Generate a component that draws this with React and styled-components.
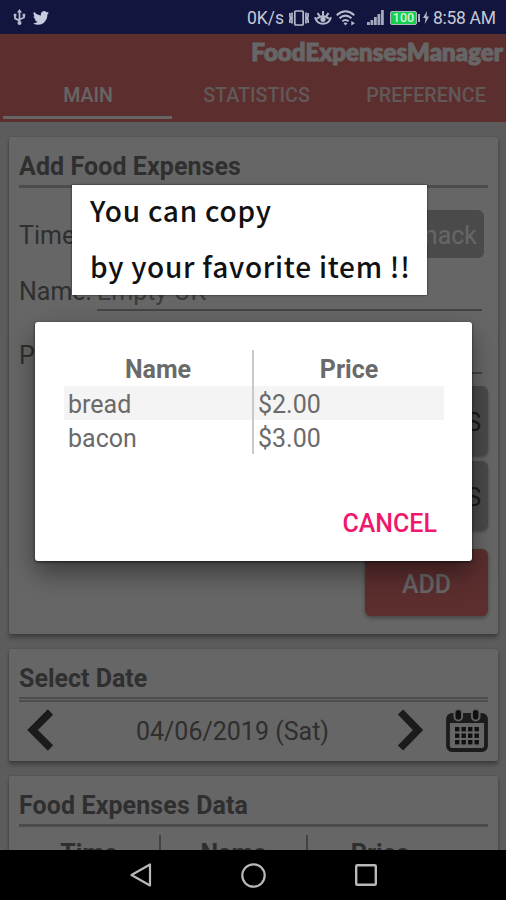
import React from 'react';
import styled, { createGlobalStyle } from 'styled-components';

const GlobalStyle = createGlobalStyle`
  * { box-sizing: border-box; }
  body { margin: 0; background: #000; font-family: Roboto, sans-serif; }
`;

const Screen = styled.div`
  position: relative;
  display: flex;
  flex-direction: column;
  width: 506px;
  height: 900px;
  overflow: hidden;
`;

const StatusBar = styled.div`
  display: flex;
  justify-content: space-between;
  align-items: center;
  flex: none;
  height: 34px;
  padding: 1px 11px 0 13px;
  background: #12163f;
  color: #c6c8d6;
  font-size: 17.5px;
  white-space: nowrap;
`;

const StatusGroup = styled.div`
  display: flex;
  align-items: center;
`;

const StatusText = styled.span`
  width: ${(p) => p.$width}px;
  padding-top: 1px;
  letter-spacing: ${(p) => p.$spacing || 0}px;
`;

const Header = styled.header`
  display: flex;
  flex-direction: column;
  flex: none;
  height: 88px;
  background: #e57373;
  color: #fff;
`;

const AppTitle = styled.h1`
  margin: 0;
  padding: 3px 3px 0 0;
  height: 37px;
  text-align: right;
  font: 900 24px/30px Lato, sans-serif;
  letter-spacing: 0.12px;
  -webkit-text-stroke: 1.1px #fff;
`;

const Tabs = styled.nav`
  display: grid;
  grid-template-columns: 169px 169px 1fr;
  flex: 1;
  padding: 0 0 3px 3px;
`;

const Tab = styled.div`
  display: flex;
  align-items: center;
  justify-content: center;
  padding: 4px 0 0 ${(p) => (p.$active ? 1 : p.$last ? 5 : 0)}px;
  border-bottom: 3px solid ${(p) => (p.$active ? '#fff' : 'transparent')};
  color: ${(p) => (p.$active ? '#fff' : '#f3dcdc')};
  font-size: ${(p) => (p.$active ? 19.5 : 19.7)}px;
  font-weight: 500;
`;

const Content = styled.main`
  display: flex;
  flex-direction: column;
  flex: 1;
  gap: 15px;
  min-height: 0;
  padding: 15px 8px 0 9px;
  overflow: hidden;
  background: #e6e6e6;
`;

const Card = styled.section`
  flex: none;
  height: ${(p) => p.$height}px;
  padding: 15px 10px 0;
  border-radius: 2px;
  background: #fff;
  box-shadow: 0 4px 4px rgba(0, 0, 0, 0.3), 0 0 2px rgba(0, 0, 0, 0.25);
  color: #757575;
`;

const CardTitle = styled.h2`
  height: 33px;
  margin: 0;
  font-size: 25px;
  font-weight: 700;
  line-height: 30px;
  letter-spacing: ${(p) => p.$spacing || 0}px;
`;

const Rule = styled.div`
  height: ${(p) => (p.$double ? 5 : 4)}px;
  border-top: ${(p) => (p.$double ? 2 : 3)}px solid #bdbdbd;
  border-bottom: ${(p) => (p.$double ? 2 : 0)}px solid #bdbdbd;
`;

const FieldRow = styled.div`
  display: flex;
  justify-content: space-between;
  height: ${(p) => p.$height}px;
  margin-top: ${(p) => p.$gap || 0}px;
  padding-right: ${(p) => p.$right || 0}px;
  font-size: 25px;
  line-height: 30px;
`;

const FieldLabel = styled.span`
  padding-top: ${(p) => p.$drop || 0}px;
`;

const Input = styled.div`
  width: 385px;
  height: 100%;
  padding-top: 2px;
  border-bottom: 2px solid #ababab;
  color: #949494;
`;

const GreyButton = styled.div`
  display: flex;
  align-items: center;
  justify-content: flex-end;
  width: ${(p) => p.$width}px;
  height: ${(p) => p.$height}px;
  padding: 3px 7px 0 0;
  border-radius: 6px;
  background: #b9b9b9;
  color: ${(p) => p.$color};
  font-size: 25px;
  box-shadow: ${(p) => (p.$raised ? '0 2px 3px rgba(0,0,0,.3)' : 'none')};
`;

const ButtonStack = styled.div`
  display: flex;
  flex-direction: column;
  align-items: flex-end;
  gap: 6px;
  margin-top: 12px;
`;

const AddButton = styled.div`
  display: flex;
  align-items: center;
  justify-content: center;
  width: 123px;
  height: 67px;
  margin-top: 13px;
  padding-top: 3px;
  border-radius: 6px;
  background: #e57373;
  color: #fff;
  font-size: 25px;
  font-weight: 500;
  box-shadow: 0 2px 4px rgba(0, 0, 0, 0.35);
`;

const DateRow = styled.div`
  display: grid;
  grid-template-columns: 42px 1fr 44px 42px;
  align-items: center;
  column-gap: 6px;
  height: 56px;
  color: #757575;
`;

const DateText = styled.span`
  padding: 3px 0 0 8px;
  text-align: center;
  font-size: 25px;
`;

const DataHead = styled.div`
  display: grid;
  grid-template-columns: 142px 147px 1fr;
  margin-top: 7px;
`;

const DataCell = styled.div`
  height: 60px;
  padding-top: 4px;
  border-right: ${(p) => (p.$last ? 0 : 2)}px solid #a5a5a5;
  padding-right: ${(p) => (p.$last ? 36 : 0)}px;
  text-align: center;
  font-size: 25px;
  font-weight: 700;
  line-height: 30px;
`;

const NavBar = styled.div`
  display: flex;
  align-items: center;
  justify-content: center;
  flex: none;
  gap: 89px;
  height: 50px;
  background: #000;
`;

const Scrim = styled.div`
  position: absolute;
  inset: 34px 0 50px;
  background: rgba(0, 0, 0, 0.6);
`;

const Dialog = styled.div`
  position: absolute;
  left: 35px;
  top: 322px;
  display: flex;
  flex-direction: column;
  width: 437px;
  height: 239px;
  padding: 28px 28px 0 29px;
  border-radius: 3px;
  background: #fff;
  color: #6a6a6a;
  box-shadow: 0 12px 26px rgba(0, 0, 0, 0.42), 0 1px 3px rgba(0, 0, 0, 0.6);
`;

const ItemTable = styled.div`
  display: grid;
  grid-template-columns: 190px 190px;
  height: 104px;
`;

const Column = styled.div`
  border-right: ${(p) => (p.$divided ? 2 : 0)}px solid #c9c9c9;
`;

const ColumnHead = styled.div`
  height: 36px;
  padding-top: 5px;
  text-align: center;
  font-size: 25px;
  font-weight: 700;
  line-height: 30px;
`;

const ItemCell = styled.div`
  height: 34px;
  padding: 2px 4px 0;
  background: ${(p) => (p.$striped ? '#f4f4f4' : 'transparent')};
  font-size: 25px;
  line-height: 34px;
`;

const CancelButton = styled.div`
  align-self: flex-end;
  margin: 55px 7px 0 0;
  color: #f0186c;
  font-size: 25px;
  font-weight: 500;
  line-height: 30px;
`;

const Callout = styled.div`
  position: absolute;
  left: 72px;
  top: 185px;
  display: flex;
  flex-direction: column;
  gap: 1px;
  width: 355px;
  height: 110px;
  padding-left: 18px;
  background: #fff;
  color: #111;
  font: 500 28px/50px 'Noto Sans CJK JP', sans-serif;
  letter-spacing: 0.75px;
  white-space: nowrap;
  box-shadow: 0 0 2px rgba(0, 0, 0, 0.7);
`;

const CalloutLine = styled.div`
  height: 55px;
`;

const Icon = styled.svg`
  display: block;
  flex: none;
  margin-right: ${(p) => p.$after || 0}px;
  overflow: visible;
`;

const UsbIcon = () => (
  <Icon $after={7} width="13" height="17" viewBox="0 0 13 17" fill="none" stroke="#b9bbcb" strokeWidth="1.8">
    <path d="M6.5 2v12M2 6v3.4l4.5 2.2M11 6v2.5L6.5 10.5" />
    <path d="M6.5 0l2.5 3.6H4zM.8 4.8h2.6v2.6H.8zM9.6 4.8h2.6v2.6H9.6z" fill="#b9bbcb" stroke="none" />
    <circle cx="6.5" cy="14" r="2" fill="#b9bbcb" stroke="none" />
  </Icon>
);

const TwitterIcon = () => (
  <Icon width="16" height="14" viewBox="0 2 24 20" preserveAspectRatio="none" fill="#c9cbe0">
    <path d="M23.95 4.57a10 10 0 0 1-2.82.77 4.96 4.96 0 0 0 2.16-2.72c-.95.55-2 .95-3.13 1.18a4.92 4.92 0 0 0-8.38 4.48C7.69 8.1 4.07 6.13 1.64 3.16a4.92 4.92 0 0 0 1.52 6.57 4.9 4.9 0 0 1-2.23-.61v.06a4.92 4.92 0 0 0 3.95 4.83 5 5 0 0 1-2.21.08 4.94 4.94 0 0 0 4.6 3.42A9.87 9.87 0 0 1 0 19.54a14 14 0 0 0 7.55 2.21c9.05 0 14-7.5 14-13.98 0-.21 0-.42-.02-.63a9.9 9.9 0 0 0 2.42-2.57z" />
  </Icon>
);

const VibrateIcon = () => (
  <Icon $after={5} width="20" height="16" viewBox="0 0 20 16" fill="none" stroke="#b9bbcb" strokeWidth="1.7">
    <rect x="5.8" y="1" width="8.4" height="14" rx="1" />
    <path d="M3 2.5v11M17 2.5v11M.9 3v3l.6 2-.6 2v3M19.1 3v3l-.6 2 .6 2v3" />
  </Icon>
);

const EyeIcon = () => (
  <Icon $after={4} width="18" height="15" viewBox="0 0 18 15" fill="none" stroke="#b9bbcb" strokeWidth="2">
    <path d="M1 7.2Q3 13.8 9 13.8T17 7.2M3 8.8Q9 3.5 15 8.8M9 1v4M3.5 3l2 2.8M14.5 3l-2 2.8" />
    <circle cx="9" cy="9.3" r="2.6" fill="#b9bbcb" stroke="none" />
  </Icon>
);

const WifiIcon = () => (
  <Icon $after={12} width="19" height="16" viewBox="0 0 19 16" fill="none" stroke="#b9bbcb" strokeWidth="2">
    <path d="M.7 5.2Q9.5-2.6 18.3 5.2M3.5 8.3Q9.5 3 15.5 8.3M6.3 11.3Q9.5 8.6 12.7 11.3" />
    <path d="M9.5 15.5l-2-2.2q2-1.6 4 0zM15.3 11l3.7 2.3-3.7 2.3z" fill="#b9bbcb" stroke="none" />
  </Icon>
);

const SignalIcon = () => (
  <Icon $after={6} width="17" height="15" viewBox="0 0 17 15" fill="#a6a8bc">
    <path d="M0 12h2.8v3H0zM3.5 10h2.8v5H3.5zM7 7h2.8v8H7zM10.5 4h2.8v11h-2.8zM14 0h2.8v15H14z" />
  </Icon>
);

const Battery = styled.div`
  display: flex;
  align-items: center;
  justify-content: center;
  width: 27px;
  height: 14px;
  border: 1px solid #aeb7bd;
  border-radius: 2px;
  background: #14cf4c;
  color: #d5f5dc;
  font-size: 12.5px;
  font-weight: 500;
  line-height: 12px;
`;

const BatteryTip = styled.div`
  width: 2px;
  height: 8px;
  margin: 0 3px 0 1px;
  background: #aeb0c0;
`;

const BoltIcon = () => (
  <Icon $after={4} width="6" height="13" viewBox="0 0 6 13" fill="#b9bbcb">
    <path d="M4 0L0 7h2.5L1.8 13 6 5.5H3.4z" />
  </Icon>
);

const Chevron = ({ flip }) => (
  <Icon width="42" height="44" viewBox="0 0 42 44" fill="none" stroke="#444" strokeWidth="7.5">
    <path d={flip ? 'M4.5 4L22 22L4.5 40' : 'M31.5 4L13.5 22L31.5 40'} />
  </Icon>
);

const CalendarIcon = () => (
  <Icon width="42" height="43" viewBox="0 0 42 43">
    <rect x="2" y="6" width="38" height="35" rx="4" fill="none" stroke="#444" strokeWidth="3.8" />
    <path d="M2 14V8q0-3 3-3h32q3 0 3 3v6z" fill="#444" />
    {[12.3, 29.7].map((x) => (
      <rect key={x} x={x - 3.8} y="0" width="7.6" height="11.5" rx="3.8" fill="#282828" stroke="#f2f2f2" strokeWidth="2" />
    ))}
    {[18, 24.5, 31].map((y) =>
      [9, 15.5, 22, 28.5].map((x) => <rect key={`${x}-${y}`} x={x} y={y} width="4.4" height="4.4" fill="#282828" />)
    )}
  </Icon>
);

const BackIcon = () => (
  <Icon width="22" height="24" viewBox="0 0 22 24" fill="none" stroke="#b8b8b8" strokeWidth="2.2" strokeLinejoin="round">
    <path d="M20 1.5v21L1.5 12z" />
  </Icon>
);

const HomeIcon = () => (
  <Icon width="25" height="25" viewBox="0 0 25 25" fill="none" stroke="#b8b8b8" strokeWidth="2.2">
    <circle cx="12.5" cy="12.5" r="11.2" />
  </Icon>
);

const RecentIcon = () => (
  <Icon width="22" height="22" viewBox="0 0 22 22" fill="none" stroke="#b8b8b8" strokeWidth="2.4">
    <rect x="1.2" y="1.2" width="19.6" height="19.6" rx="1" />
  </Icon>
);

export default function App() {
  return (
    <>
      <GlobalStyle />
      <Screen>
        <StatusBar>
          <StatusGroup>
            <UsbIcon />
            <TwitterIcon />
          </StatusGroup>
          <StatusGroup>
            <StatusText $width={42}>0K/s</StatusText>
            <VibrateIcon />
            <EyeIcon />
            <WifiIcon />
            <SignalIcon />
            <Battery>100</Battery>
            <BatteryTip />
            <BoltIcon />
            <StatusText $width={62} $spacing={-0.3}>8:58 AM</StatusText>
          </StatusGroup>
        </StatusBar>
        <Header>
          <AppTitle>FoodExpensesManager</AppTitle>
          <Tabs>
            <Tab $active>MAIN</Tab>
            <Tab>STATISTICS</Tab>
            <Tab $last>PREFERENCE</Tab>
          </Tabs>
        </Header>
        <Content>
          <Card $height={497}>
            <CardTitle $spacing={0.08}>Add Food Expenses</CardTitle>
            <Rule />
            <FieldRow $height={48} $gap={21} $right={4}>
              <FieldLabel $drop={11}>Time:</FieldLabel>
              <GreyButton $width={90} $height={48} $color="#fff">Snack</GreyButton>
            </FieldRow>
            <FieldRow $height={36} $gap={17} $right={6}>
              <FieldLabel $drop={2}>Name:</FieldLabel>
              <Input>Empty OK</Input>
            </FieldRow>
            <FieldRow $height={35} $gap={28} $right={6}>
              <FieldLabel $drop={2}>Price:</FieldLabel>
              <Input />
            </FieldRow>
            <ButtonStack>
              <GreyButton $width={200} $height={69} $color="#444" $raised>FAVORITES</GreyButton>
              <GreyButton $width={200} $height={69} $color="#444" $raised>ITEMS</GreyButton>
              <AddButton>ADD</AddButton>
            </ButtonStack>
          </Card>
          <Card $height={112}>
            <CardTitle>Select Date</CardTitle>
            <Rule $double />
            <DateRow>
              <Chevron />
              <DateText>04/06/2019 (Sat)</DateText>
              <Chevron flip />
              <CalendarIcon />
            </DateRow>
          </Card>
          <Card $height={200}>
            <CardTitle $spacing={0.1}>Food Expenses Data</CardTitle>
            <Rule />
            <DataHead>
              <DataCell>Time</DataCell>
              <DataCell>Name</DataCell>
              <DataCell $last>Price</DataCell>
            </DataHead>
          </Card>
        </Content>
        <NavBar>
          <BackIcon />
          <HomeIcon />
          <RecentIcon />
        </NavBar>
        <Scrim />
        <Callout>
          <CalloutLine>You can copy</CalloutLine>
          <CalloutLine>by your favorite item !!</CalloutLine>
        </Callout>
        <Dialog>
          <ItemTable>
            <Column $divided>
              <ColumnHead>Name</ColumnHead>
              <ItemCell $striped>bread</ItemCell>
              <ItemCell>bacon</ItemCell>
            </Column>
            <Column>
              <ColumnHead>Price</ColumnHead>
              <ItemCell $striped>$2.00</ItemCell>
              <ItemCell>$3.00</ItemCell>
            </Column>
          </ItemTable>
          <CancelButton>CANCEL</CancelButton>
        </Dialog>
      </Screen>
    </>
  );
}
